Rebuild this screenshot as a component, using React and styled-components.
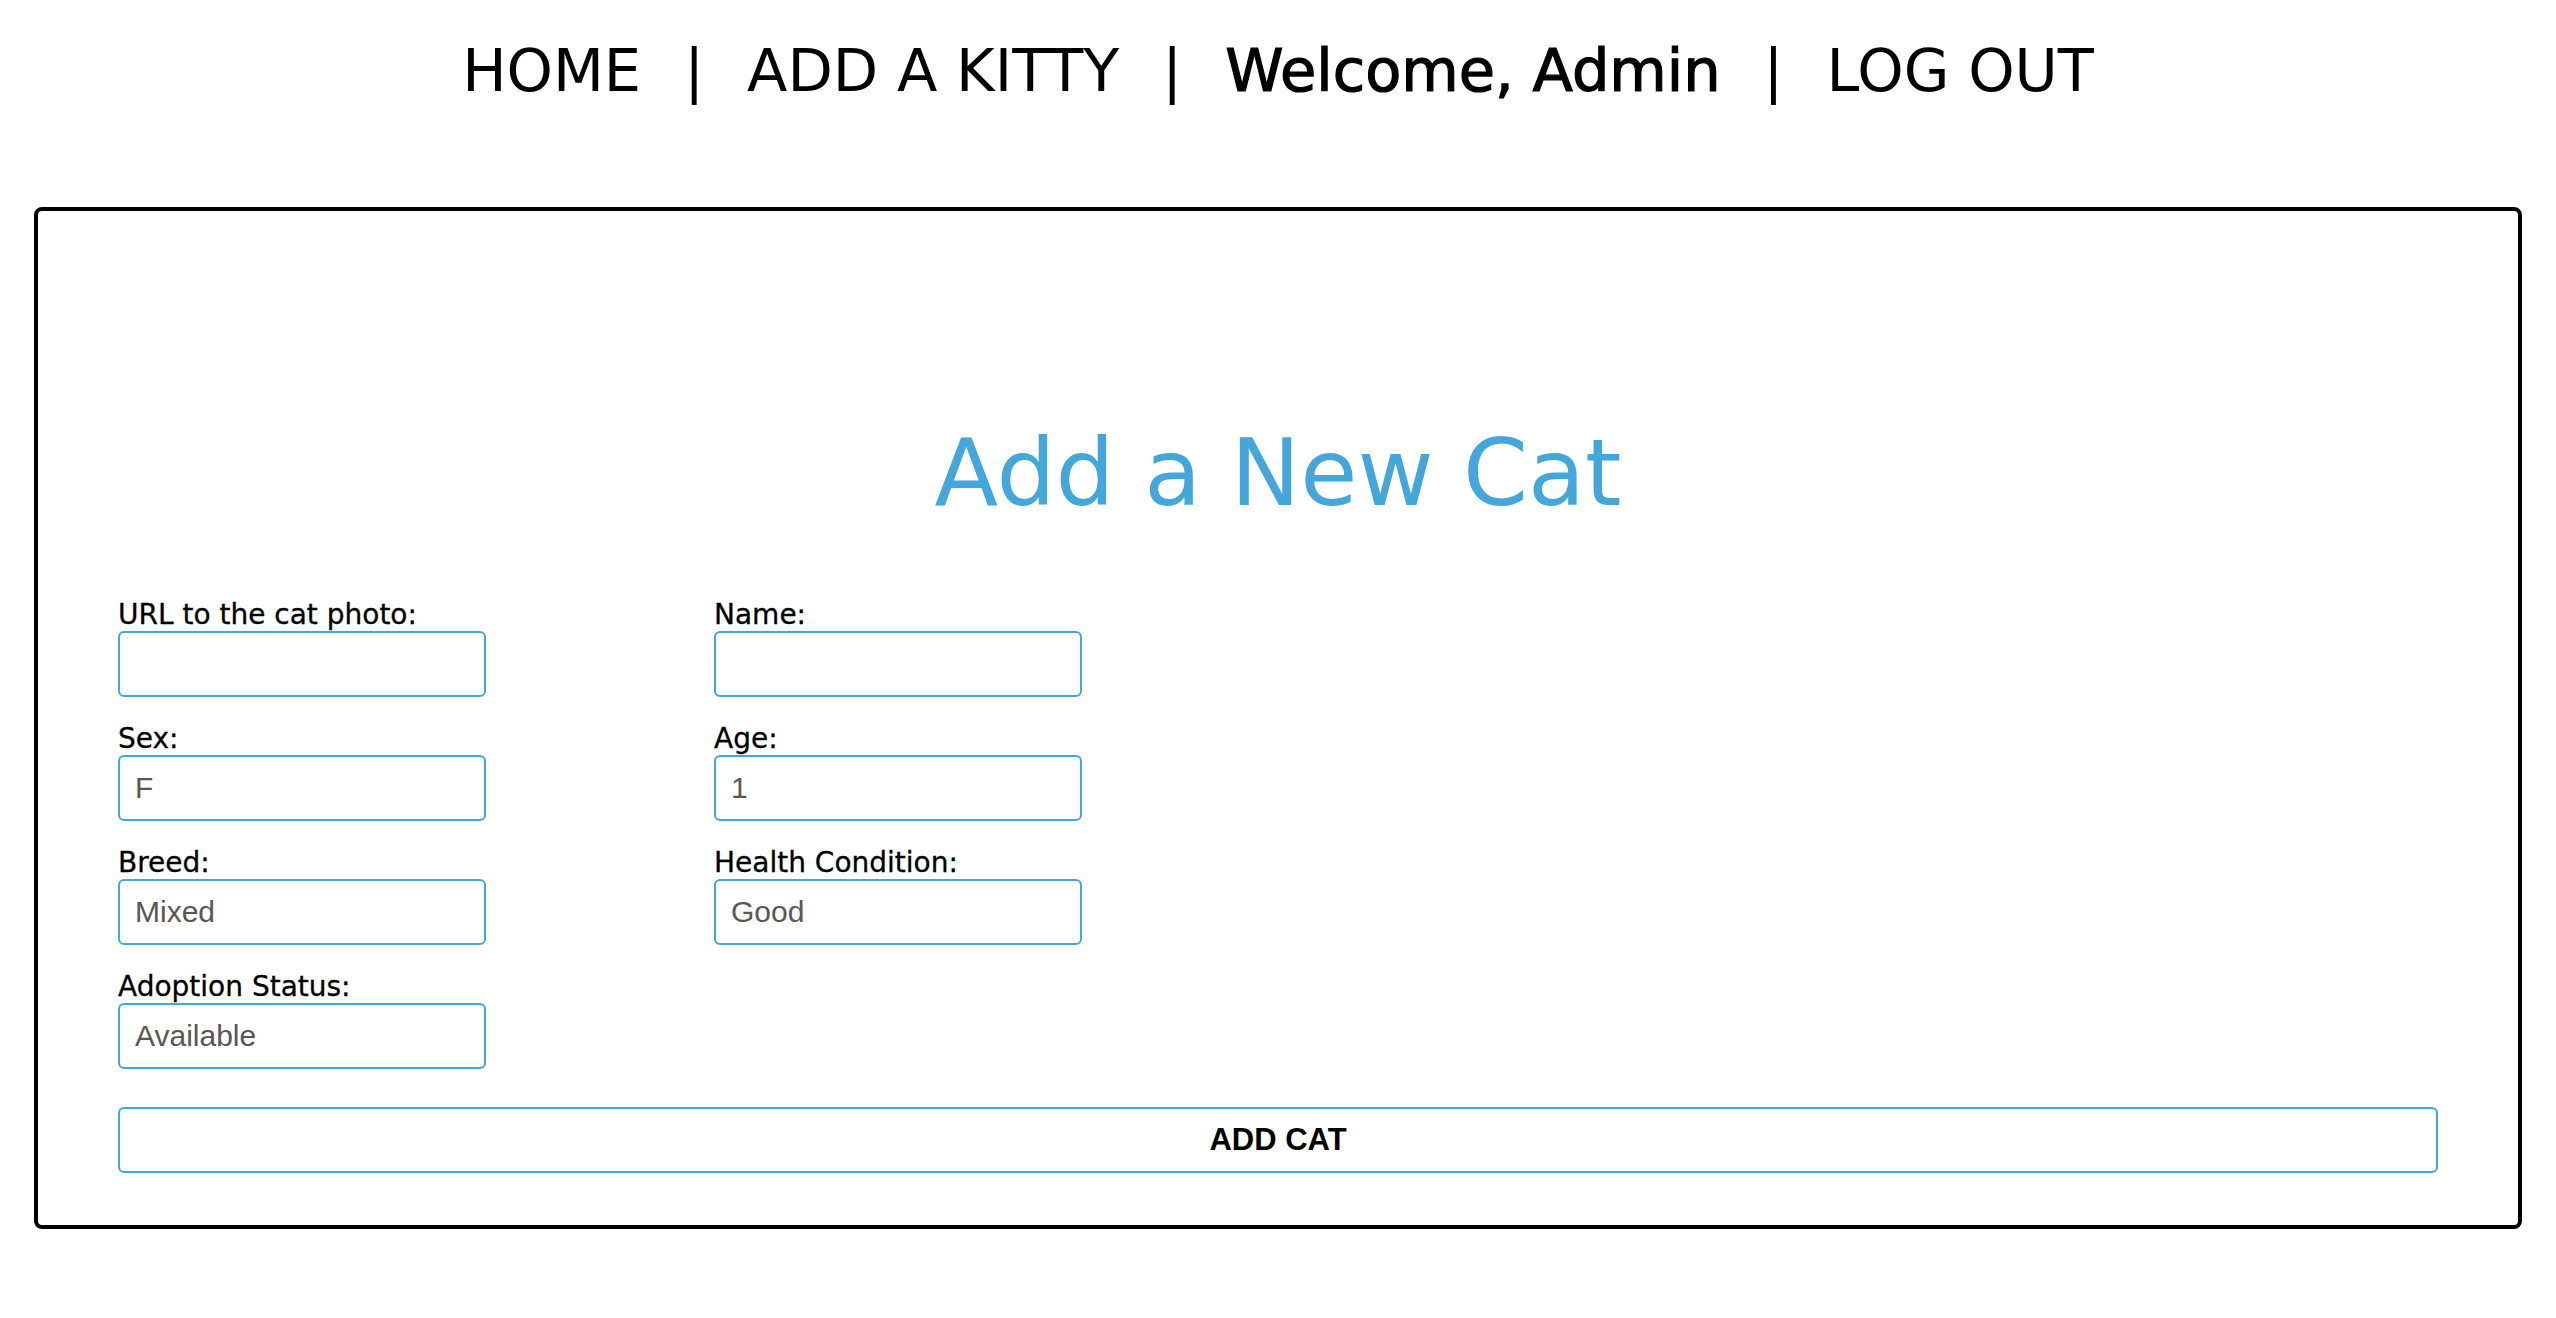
import React from "react";
import styled, { createGlobalStyle } from "styled-components";

const GlobalStyle = createGlobalStyle`
  html, body {
    margin: 0;
    padding: 0;
    background: #ffffff;
  }
  body {
    font-family: "DejaVu Sans", sans-serif;
    color: #000000;
  }
`;

const fields = [
  { label: "URL to the cat photo:", value: "" },
  { label: "Name:", value: "" },
  { label: "Sex:", value: "F" },
  { label: "Age:", value: "1" },
  { label: "Breed:", value: "Mixed" },
  { label: "Health Condition:", value: "Good" },
  { label: "Adoption Status:", value: "Available" },
];

const App = () => {
  return (
    <Page>
      <GlobalStyle />
      <Nav>
        <NavLink>HOME</NavLink>
        <Divider>|</Divider>
        <NavLink>ADD A KITTY</NavLink>
        <Divider>|</Divider>
        <Welcome>Welcome, Admin</Welcome>
        <Divider>|</Divider>
        <NavLink>LOG OUT</NavLink>
      </Nav>
      <Card>
        <Title>Add a New Cat</Title>
        <Form onSubmit={(e) => e.preventDefault()}>
          <FieldGrid>
            {fields.map((field) => (
              <Field key={field.label}>
                <Label>{field.label}</Label>
                <Input type="text" defaultValue={field.value} />
              </Field>
            ))}
          </FieldGrid>
          <SubmitButton type="submit">ADD CAT</SubmitButton>
        </Form>
      </Card>
    </Page>
  );
};

export default App;

const Page = styled.div`
  padding: 36px 34px 80px;
`;

const Nav = styled.nav`
  display: flex;
  justify-content: center;
  align-items: baseline;
  gap: 43px;
  font-size: 59px;
  line-height: normal;
  margin-bottom: 102px;
`;

const NavLink = styled.a`
  color: #000000;
  text-decoration: none;
  white-space: nowrap;
  cursor: pointer;
`;

const Welcome = styled.span`
  color: #000000;
  white-space: nowrap;
  -webkit-text-stroke: 1.2px #000000;
`;

const Divider = styled.span`
  color: #000000;
`;

const Card = styled.section`
  border: 4px solid #000000;
  border-radius: 8px;
  padding: 208px 80px 52px;
`;

const Title = styled.h1`
  margin: 0 0 71px;
  text-align: center;
  font-size: 93px;
  font-weight: 400;
  line-height: normal;
  color: #43a7dc;
`;

const Form = styled.form`
  display: flex;
  flex-direction: column;
  gap: 38px;
`;

const FieldGrid = styled.div`
  display: grid;
  grid-template-columns: 596px 596px;
  row-gap: 25px;
`;

const Field = styled.div`
  display: flex;
  flex-direction: column;
  align-items: flex-start;
`;

const Label = styled.label`
  font-size: 28px;
  line-height: 33px;
  color: #000000;
  -webkit-text-stroke: 0.3px #000000;
`;

const Input = styled.input`
  box-sizing: border-box;
  width: 368px;
  height: 66px;
  border: 2px solid #43a7dc;
  border-radius: 6px;
  padding: 0 15px;
  font-family: "Liberation Sans", Arial, sans-serif;
  font-size: 30px;
  color: #5c5552;
  background: #ffffff;
  outline: none;
`;

const SubmitButton = styled.button`
  box-sizing: border-box;
  width: 100%;
  height: 66px;
  border: 2px solid #43a7dc;
  border-radius: 6px;
  background: #ffffff;
  font-family: "Liberation Sans", Arial, sans-serif;
  font-size: 31px;
  font-weight: 700;
  color: #000000;
  cursor: pointer;
`;
